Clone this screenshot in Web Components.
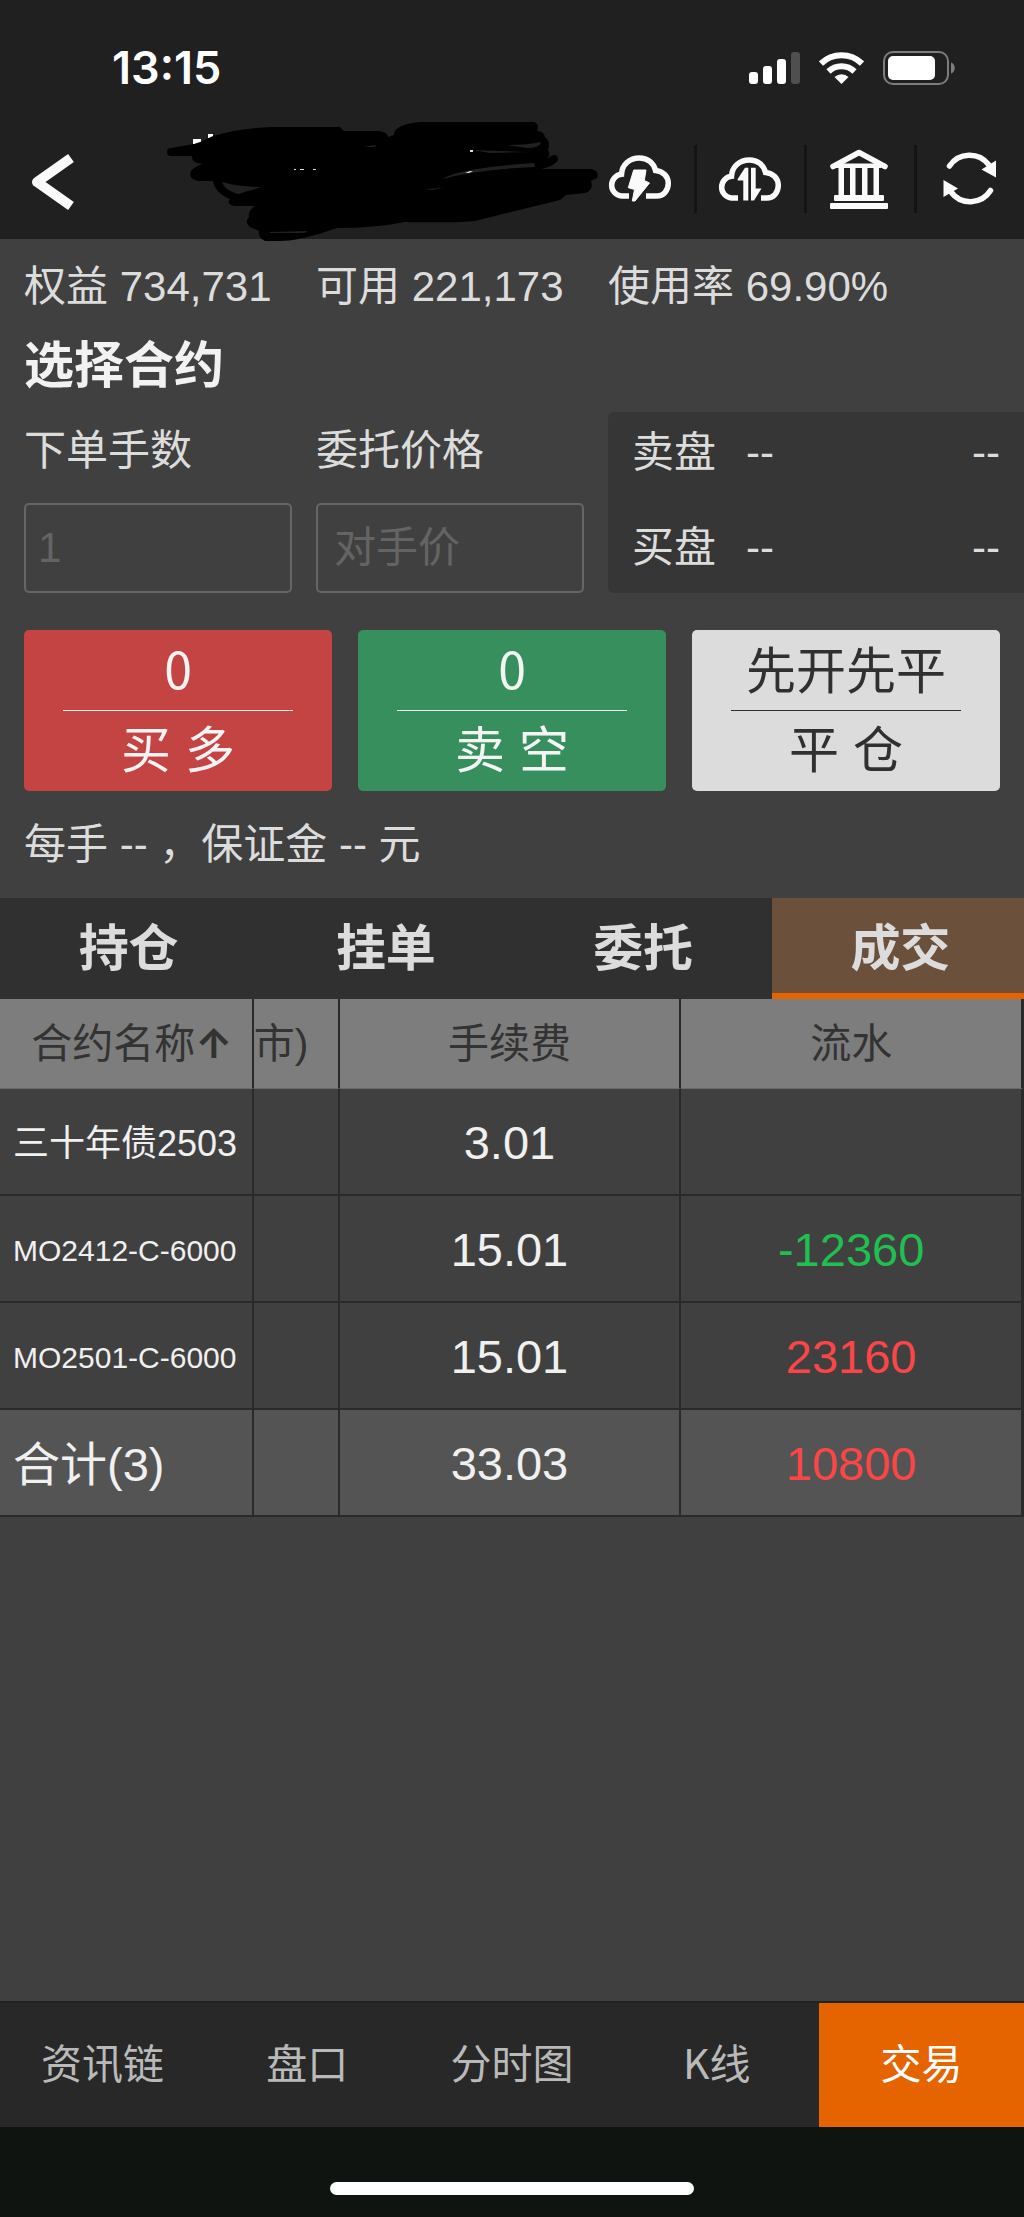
<!DOCTYPE html>
<html lang="zh-CN">
<head>
<meta charset="utf-8">
<meta name="viewport" content="width=device-width, initial-scale=1">
<title>交易</title>
<style>
  :root {
    --bg: #404040;
    --bar: #202020;
    --accent: #e66400;
    --line: #2a2a2a;
    --text: #dcdcdc;
    --cjk: "Noto Sans CJK SC";
  }
  body {
    margin: 0;
    min-height: 100vh;
    display: flex;
    flex-direction: column;
    background: var(--bg);
    color: var(--text);
    font: 42px/48px "Liberation Sans", "Noto Sans CJK SC", sans-serif;
  }
  main { flex: 1; display: flex; flex-direction: column; }
  .buttons {
    display: grid;
    grid-template-columns: repeat(3, 1fr);
    gap: 26px;
    padding: 37px 24px 30px;
  }
  .note { margin: 0; padding: 0 24px 29px; }
</style>
</head>
<body>
<status-bar>13:15</status-bar>
<trade-header></trade-header>
<main>
  <account-summary></account-summary>
  <order-form></order-form>
  <div class="buttons">
    <order-button kind="buy">0<span slot="action">买 多</span></order-button>
    <order-button kind="sell">0<span slot="action">卖 空</span></order-button>
    <order-button kind="close">先开先平<span slot="action">平 仓</span></order-button>
  </div>
  <p class="note">每手 -- ，保证金 -- 元</p>
  <record-tabs></record-tabs>
  <deal-table></deal-table>
</main>
<bottom-nav></bottom-nav>

<script>
(function(){
  const define = (name, html) => customElements.define(name, class extends HTMLElement {
    constructor(){
      super();
      this.attachShadow({mode:'open'});
    }
    connectedCallback(){
      this.shadowRoot.innerHTML = typeof html === 'function' ? html(this) : html;
    }
  });

  define('status-bar', `
    <style>
      :host{display:flex; justify-content:space-between; align-items:center; padding:44px 69px 26px 112px; background:var(--bar); color:#fff; font:600 45px/48px Inter, sans-serif}
      .icons{display:flex; align-items:center; gap:19px}
      svg{display:block}
    </style>
    <slot></slot>
    <div class="icons">
      <svg width="51" height="32" viewBox="0 0 51 32" fill="#fff" role="img" aria-label="信号">
        <rect y="20" width="9" height="12" rx="3"/><rect x="14" y="14" width="9" height="18" rx="3"/>
        <rect x="28" y="7" width="9" height="25" rx="3"/><rect x="42" width="9" height="32" rx="3" fill="#4f4f4f"/>
      </svg>
      <svg width="45" height="32" viewBox="0 0 45 32" fill="none" stroke="#fff" stroke-width="6" role="img" aria-label="Wi-Fi">
        <path d="M2 11.500A29.500 29.500 0 0 1 43 11.500"/>
        <path d="M9.500 19.500A18.500 18.500 0 0 1 35.500 19.500"/>
        <path d="M22.500 32L15.500 25A10.500 10.500 0 0 1 29.500 25Z" fill="#fff" stroke="none"/>
      </svg>
      <svg width="72" height="34" viewBox="0 0 72 34" role="img" aria-label="电池">
        <rect x="1" y="1" width="64" height="32" rx="9" fill="none" stroke="#7d7d7d" stroke-width="2"/>
        <rect x="5" y="5" width="47" height="24" rx="5" fill="#fff"/>
        <path d="M68 11.500C73 13 73 21 68 22.500Z" fill="#7d7d7d"/>
      </svg>
    </div>`);

  const cloud = 'H14.500A10.900 10.900 0 0 1 14.500 19.300C15 9.500 22.500 3 32.500 3C40.500 3 46.800 8 48.500 15.500C56 16 61.300 21.500 61.300 28.300C61.300 36 56 41 50 41H';

  define('trade-header', `
    <style>
      :host{display:flex; height:121px; background:var(--bar); position:relative; z-index:1}
      button{display:flex; align-items:center; justify-content:center; padding:0; border:0; background:none; color:#fafafa}
      svg{display:block; overflow:visible}
      .back{width:106px; padding-top:6px}
      .title{flex:1; display:flex; justify-content:flex-end}
      nav{display:flex; align-items:center}
      nav button{box-sizing:border-box; width:110px; height:68px}
      nav button + button{border-left:3px solid #141414; padding-right:3px}
    </style>
    <button class="back" aria-label="返回">
      <svg width="44" height="56" viewBox="0 0 44 56" fill="none" stroke="currentColor" stroke-width="10" stroke-linejoin="round"><path d="M40 4L6 28L40 52"/></svg>
    </button>
    <div class="title">
      <svg width="432" height="120" viewBox="152 118 432 120" aria-hidden="true">
        <path fill="#fff" d="M193 139h8v5h-8zM208 134h5v4h-5z"/>
        <path d="M167 152Q167 148 171 148L194 144L200 142L213 136Q240 128 272 127H340L344 131H378Q388 132 388 137L394 135Q393 125 420 122H534Q540 124 537 131Q544 131 545 137Q551 142 548 150Q551 154 547 159L551 156Q558 153 558 160Q556 165 542 169H592Q600 172 597 178L591 181Q594 190 585 193L566 195L560 200L475 221Q460 223 405 222Q375 228 337 228Q300 241 280 241H265Q258 238 259 231L250 227Q244 222 249 217Q248 210 255 206H234Q226 204 230 199Q215 193 213 181H198Q188 179 191 171Q195 166 203 164Q191 163 192 156H171Q167 156 167 152Z"/>
        <g fill="#202020">
          <path d="M364 147Q372 145 377 145L374 147Z"/><path d="M507 145Q528 145 541 142Q540 148 527 148Z"/>
          <path d="M473 150Q500 151 530 152L490 153Z"/><path d="M222 182Q240 187 262 187L238 194Q224 190 222 182Z"/>
          <path d="M270 232L308 231L304 233H270Z"/><path d="M442 179Q460 168 534 163L535 167Q480 169 442 179Z"/>
          <path d="M426 189L444 188L432 190Z"/>
        </g>
        <g fill="#ddd"><path d="M470 150h3v2h-3zM465 173l5-2h3l-4 2zM294 169h2v1h-2zM300 169h4v1h-4zM313 169h3v1h-3z"/></g>
      </svg>
    </div>
    <nav>
      <button aria-label="闪电下单">
        <svg width="64" height="47" viewBox="0 0 64 47"><path d="M22 41${cloud}39" fill="none" stroke="currentColor" stroke-width="5.500"/>
        <path d="M26.700 15H39L37.300 25.500L42.500 28L28 46L25.300 46L27.500 34.500L21.300 32.700Z" fill="currentColor" stroke="currentColor" stroke-linejoin="round"/></svg>
      </button>
      <button aria-label="云同步">
        <svg width="64" height="44" viewBox="0 0 64 44"><path d="M21 41${cloud}44" fill="none" stroke="currentColor" stroke-width="5.500"/>
        <path d="M31.300 10.700H28L20.700 22V23.500H26.300V43.500H31.300ZM34 10.700H38.700V31.500H44.500L37 43.500H34Z" fill="currentColor"/></svg>
      </button>
      <button aria-label="银期转账">
        <svg width="58" height="60" viewBox="0 0 58 60" fill="currentColor"><path d="M3 17.500L29 3.500L55 17.500" fill="none" stroke="currentColor" stroke-width="5.500" stroke-linecap="round" stroke-linejoin="round"/>
        <path d="M6 14.500H51V19H6zM8.500 18h5.500v29H8.500zM20 18h5.500v29H20zM32 18h5.500v29H32zM43.500 18H49v29H43.500z"/>
        <rect x="4" y="46" width="50" height="6" rx="1"/><rect y="54" width="58" height="6" rx="1"/></svg>
      </button>
      <button aria-label="刷新">
        <svg width="53" height="53" viewBox="0 0 53 53" fill="none" stroke="currentColor" stroke-width="5.500" stroke-linecap="round"><path d="M6.500 14A24 24 0 0 1 45.500 12.500M47.500 38.500A24 24 0 0 1 8 40"/>
        <path d="M53 8.500V25.500L38.500 17.500ZM.500 28V45L15 36.500Z" fill="currentColor" stroke="none"/></svg>
      </button>
    </nav>`);

  // both rows share the same three columns, the last one runs to the screen edge
  const columns = 'display:grid; grid-template-columns:67fr 67fr 104fr; column-gap:24px; padding-left:24px';

  define('account-summary', `
    <style>
      :host{display:block; padding-top:24px}
      .row{${columns}; white-space:nowrap}
      h1{margin:25px 24px 16px; color:#f2f2f2; font-size:50px; line-height:60px; font-weight:700}
    </style>
    <div class="row"><span>权益 734,731</span><span>可用 221,173</span><span>使用率 69.90%</span></div>
    <h1>选择合约</h1>`);

  define('order-form', `
    <style>
      :host{${columns}}
      .field{display:flex; flex-direction:column; gap:28px; padding-top:15px}
      input{box-sizing:border-box; width:100%; height:90px; padding:0 12px; border:2px solid #666; border-radius:5px; background:none; color:inherit; font:inherit}
      #price{padding:0 16px}
      input::placeholder{color:#646464; opacity:1}
      .book{display:flex; flex-direction:column; gap:47px; padding:17px 24px 21px; background:#363636; border-radius:6px 0 0 6px}
      .book div{display:flex; gap:30px}
      .book span:last-child{margin-left:auto}
    </style>
    <div class="field"><label for="lots">下单手数</label><input id="lots" inputmode="numeric" placeholder="1"></div>
    <div class="field"><label for="price">委托价格</label><input id="price" placeholder="对手价"></div>
    <div class="book">
      <div><span>卖盘</span><span>--</span><span>--</span></div>
      <div><span>买盘</span><span>--</span><span>--</span></div>
    </div>`);

  define('order-button', `
    <style>
      :host{--fill:#c44444; --ink:#f4f4f4; display:block}
      :host([kind=sell]){--fill:#388f5e}
      :host([kind=close]){--fill:#dcdcdc; --ink:#303030}
      button{display:flex; flex-direction:column; width:100%; height:161px; padding:0 39px; border:0; border-radius:5px; background:var(--fill); color:var(--ink); font:inherit; font-size:50px; line-height:80px; white-space:nowrap}
      .top{height:80px; border-bottom:1px solid; font-family:var(--cjk), sans-serif; line-height:74px}
      .top, .action{align-self:stretch; display:flex; justify-content:center}
    </style>
    <button type="button"><span class="top"><slot></slot></span><span class="action"><slot name="action"></slot></span></button>`);

  define('record-tabs', `
    <style>
      :host{display:block; overflow:hidden; background:#303030}
      /* the last tab runs a little past the screen edge */
      div{display:grid; grid-template-columns:repeat(4, 1fr); margin-right:-5px}
      button{height:101px; padding:0; border:0; background:none; color:var(--text); font:inherit; font-size:50px; font-weight:700}
      [aria-selected=true]{background:#6b503c; box-shadow:inset 0 -6px var(--accent)}
    </style>
    <div role="tablist">
      <button role="tab">持仓</button><button role="tab">挂单</button><button role="tab">委托</button><button role="tab" aria-selected="true">成交</button>
    </div>`);

  const deals = [
    ['三十年债2503', '3.01', '', 'mid'],
    ['MO2412-C-6000', '15.01', '-12360', 'small'],
    ['MO2501-C-6000', '15.01', '23160', 'small'],
  ];
  const row = ([name, fee, flow, size]) => `
    <tr><th scope="row" class="${size || ''}">${name}</th><td></td><td>${fee}</td><td class="${flow.startsWith('-') ? 'down' : 'up'}">${flow}</td></tr>`;

  define('deal-table', () => `
    <style>
      :host{display:block}
      table{width:100%; table-layout:fixed; border-collapse:separate; border-spacing:0; border-right:1px solid var(--line)}
      .name{width:24.800%} .lots{width:8.400%} .fee{width:33.400%}
      th, td{box-sizing:border-box; height:107px; padding:2px 0 0; border-right:2px solid var(--line); border-bottom:2px solid var(--line); font-weight:400; text-align:center; white-space:nowrap; overflow:hidden}
      thead th{height:90px; padding:0; border-bottom:1px solid #6a6a6a; background:#7d7d7d; color:#333; font-size:41px}
      thead th:first-child{padding-left:12px}
      thead th:nth-child(2){text-align:left}
      b{font-family:Inter, sans-serif; font-weight:700}
      tbody, tfoot{color:#f0f0f0; font-size:47px}
      [scope=row]{padding:4px 0 0 13px; text-align:left}
      .mid{font-size:36px} .small{font-size:30px}
      .up{color:#fa4646} .down{color:#1fbf50}
      tfoot{background:#545454}
    </style>
    <table>
      <colgroup><col class="name"><col class="lots"><col class="fee"><col></colgroup>
      <thead><tr><th>合约名称<b>↑</b></th><th>市)</th><th>手续费</th><th>流水</th></tr></thead>
      <tbody>${deals.map(row).join('')}</tbody>
      <tfoot>${row(['合计(3)', '33.03', '10800'])}</tfoot>
    </table>`);

  define('bottom-nav', `
    <style>
      :host{display:block; background:#101410}
      nav{display:grid; grid-template-columns:repeat(5, 1fr); border-top:2px solid #222; background:#282828}
      a{height:124px; line-height:116px; color:#b9b9b9; font-size:41px; text-align:center; text-decoration:none; font-family:var(--cjk), sans-serif}
      [aria-current]{background:var(--accent); color:#fff}
      .home{width:364px; height:13px; margin:55px auto 22px; border-radius:7px; background:#fff}
    </style>
    <nav><a href="#info">资讯链</a><a href="#book">盘口</a><a href="#chart">分时图</a><a href="#kline">K线</a><a href="#trade" aria-current="page">交易</a></nav>
    <div class="home"></div>`);
})();
</script>
</body>
</html>
